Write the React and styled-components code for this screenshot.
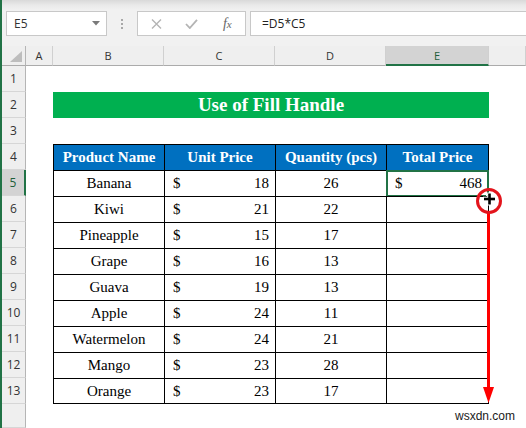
import React from 'react';
import styled, { createGlobalStyle, css } from 'styled-components';

const GlobalStyle = createGlobalStyle`
  html, body { margin: 0; padding: 0; background: #fff; overflow: hidden; }
  * { box-sizing: border-box; }
`;

const Window = styled.div`
  position: relative;
  display: flex;
  width: 526px;
  height: 428px;
  overflow: hidden;
  font-family: "Open Sans", "Noto Sans", sans-serif;
`;

const Stripe = styled.div`
  width: 2px;
  flex: none;
  background: #217346;
`;

const Main = styled.div`
  flex: 1;
  min-width: 0;
  display: flex;
  flex-direction: column;
`;

const FormulaBar = styled.div`
  height: 46px;
  flex: none;
  display: flex;
  align-items: flex-start;
  padding: 11px 0 0 4px;
  background: linear-gradient(#d9d9d9 0px, #e9e9e9 5px, #f1f1f1 10px, #f1f1f1 100%);
`;

const Box = styled.div`
  height: 25px;
  background: #fff;
  border: 1px solid #c8c8c8;
  display: flex;
  align-items: center;
`;

const NameBox = styled(Box)`
  width: 101px;
  justify-content: space-between;
  padding: 0 6px 0 7px;
  font-size: 12px;
  color: #333;
`;

const Grip = styled.div`
  width: 30px;
  height: 25px;
  display: flex;
  flex-direction: column;
  align-items: center;
  justify-content: center;
  gap: 2px;
  padding-right: 1px;
`;

const GripDot = styled.span`
  width: 2px;
  height: 2px;
  background: #a8a8a8;
`;

const FxBox = styled(Box)`
  width: 109px;
  padding-left: 1px;
`;

const FxItem = styled.div`
  width: 36px;
  display: flex;
  justify-content: center;
  align-items: center;
  color: #666;
  font-family: "Liberation Serif", "Times New Roman", serif;
  font-style: italic;
  font-size: 14px;
`;

const FormulaInput = styled(Box)`
  flex: 1;
  margin-left: 4px;
  border-right: none;
  padding-left: 11px;
  font-size: 12px;
  color: #222;
`;

const Sheet = styled.div`
  flex: 1;
  display: grid;
  grid-template-columns: 24px 27px 111px 111px 111px 103px 1fr;
  grid-template-rows: 20px repeat(13, 26px) 1fr;
  background: #fff;
`;

const headBase = css`
  background: #efefef;
  display: flex;
  align-items: center;
  justify-content: center;
  font-size: 11px;
  color: #333;
`;

const Corner = styled.div`
  ${headBase};
  border-right: 1px solid #b5b5b5;
  border-bottom: 1px solid #ababab;
  justify-content: flex-end;
  align-items: flex-end;
  padding: 0 3px 3px 0;
`;

const ColHead = styled.div`
  ${headBase};
  border-right: 1px solid #d0d0d0;
  border-bottom: 1px solid #ababab;
  ${p => p.$active && css`
    background: #d3d3d3;
    color: #1e5e3a;
    border-bottom: 2px solid #217346;
  `}
`;

const RowHead = styled.div`
  ${headBase};
  font-size: 12px;
  border-right: 1px solid #b5b5b5;
  border-bottom: 1px solid #d6d6d6;
  ${p => p.$active && css`
    background: #d3d3d3;
    color: #1e5e3a;
    border-right: 2px solid #217346;
  `}
`;

const Blank = styled.div``;

const Title = styled.div`
  grid-column: span 4;
  background: #00b050;
  color: #fff;
  font-family: "Liberation Serif", "Times New Roman", serif;
  font-weight: bold;
  font-size: 19px;
  display: flex;
  align-items: center;
  justify-content: center;
`;

const TableCell = styled.div`
  position: relative;
  display: flex;
  align-items: center;
  justify-content: center;
  border-top: 1px solid #000;
  border-left: 1px solid #000;
  ${p => p.$lastCol && css`border-right: 1px solid #000;`}
  ${p => p.$lastRow && css`border-bottom: 1px solid #000;`}
  font-family: "Liberation Serif", "Times New Roman", serif;
  font-size: 15px;
  color: #000;
  white-space: nowrap;
  ${p => p.$head && css`
    background: #0070c0;
    color: #fff;
    font-weight: bold;
  `}
  ${p => p.$split && css`
    justify-content: space-between;
    padding: 0 6px 0 8px;
  `}
`;

const Selection = styled.div`
  position: absolute;
  inset: -1px;
  border: 2px solid #217346;
  pointer-events: none;
`;

const Handle = styled.div`
  position: absolute;
  right: -4px;
  bottom: -4px;
  width: 5px;
  height: 5px;
  background: #217346;
  border: 1px solid #fff;
`;

const Annotation = styled.svg`
  position: absolute;
  left: 474px;
  top: 186px;
  overflow: visible;
`;

const Watermark = styled.div`
  position: absolute;
  left: 453px;
  top: 409px;
  font-family: "Liberation Sans", Arial, sans-serif;
  font-size: 12px;
  color: #1a1a1a;
  background: rgba(255, 255, 255, 0.8);
  padding: 0 2px;
`;

const products = [
  { name: 'Banana', price: 18, qty: 26, total: 468 },
  { name: 'Kiwi', price: 21, qty: 22 },
  { name: 'Pineapple', price: 15, qty: 17 },
  { name: 'Grape', price: 16, qty: 13 },
  { name: 'Guava', price: 19, qty: 13 },
  { name: 'Apple', price: 24, qty: 11 },
  { name: 'Watermelon', price: 24, qty: 21 },
  { name: 'Mango', price: 23, qty: 28 },
  { name: 'Orange', price: 23, qty: 17 },
];

const headers = ['Product Name', 'Unit Price', 'Quantity (pcs)', 'Total Price'];

function Money({ value }) {
  return (
    <>
      <span>$</span>
      <span>{value}</span>
    </>
  );
}

function renderRow(r) {
  const cells = [];
  if (r === 2) {
    cells.push(<Title key="t">Use of Fill Handle</Title>);
  } else if (r === 4) {
    headers.forEach((h, i) => {
      cells.push(
        <TableCell key={h} $head $lastCol={i === 3}>{h}</TableCell>
      );
    });
  } else if (r >= 5 && r <= 13) {
    const p = products[r - 5];
    const last = r === 13;
    cells.push(<TableCell key="b" $lastRow={last}>{p.name}</TableCell>);
    cells.push(
      <TableCell key="c" $split $lastRow={last}>
        <Money value={p.price} />
      </TableCell>
    );
    cells.push(<TableCell key="d" $lastRow={last}>{p.qty}</TableCell>);
    cells.push(
      <TableCell key="e" $lastCol $lastRow={last} $split={p.total != null}>
        {p.total != null && <Money value={p.total} />}
        {r === 5 && (
          <Selection>
            <Handle />
          </Selection>
        )}
      </TableCell>
    );
  } else {
    for (let i = 0; i < 4; i++) cells.push(<Blank key={i} />);
  }
  return (
    <React.Fragment key={r}>
      <RowHead $active={r === 5}>{r}</RowHead>
      <Blank />
      {cells}
      <Blank />
    </React.Fragment>
  );
}

export default function App() {
  const rows = [];
  for (let r = 1; r <= 13; r++) rows.push(renderRow(r));
  return (
    <>
      <GlobalStyle />
      <Window>
        <Stripe />
        <Main>
          <FormulaBar>
            <NameBox>
              <span>E5</span>
              <svg width="8" height="5" viewBox="0 0 8 5">
                <polygon points="0,0 8,0 4,4.5" fill="#7a7a7a" />
              </svg>
            </NameBox>
            <Grip>
              <GripDot />
              <GripDot />
              <GripDot />
            </Grip>
            <FxBox>
              <FxItem>
                <svg width="11" height="10" viewBox="0 0 11 10">
                  <path d="M1 0.5 L10 9.5 M10 0.5 L1 9.5" stroke="#b4b4b4" strokeWidth="1.4" fill="none" />
                </svg>
              </FxItem>
              <FxItem>
                <svg width="13" height="10" viewBox="0 0 13 10">
                  <path d="M1 5 L4.8 9 L12 0.8" stroke="#b4b4b4" strokeWidth="1.8" fill="none" />
                </svg>
              </FxItem>
              <FxItem>
                f<span style={{ fontSize: 11 }}>x</span>
              </FxItem>
            </FxBox>
            <FormulaInput>=D5*C5</FormulaInput>
          </FormulaBar>
          <Sheet>
            <Corner>
              <svg width="12" height="11" viewBox="0 0 12 11">
                <polygon points="12,0 12,11 0,11" fill="#bdbdbd" />
              </svg>
            </Corner>
            {['A', 'B', 'C', 'D', 'E'].map(l => (
              <ColHead key={l} $active={l === 'E'}>{l}</ColHead>
            ))}
            <ColHead />
            {rows}
            <RowHead />
          </Sheet>
        </Main>
        <Annotation width="30" height="220" viewBox="0 0 30 220">
          <line x1="14.5" y1="27" x2="14.5" y2="204" stroke="#ff0000" strokeWidth="3" />
          <polygon points="9,201 20,201 14.5,217" fill="#ff0000" />
          <circle cx="15" cy="15" r="11.5" fill="none" stroke="#e3141c" strokeWidth="3" />
          <rect x="9" y="10.7" width="13" height="4.6" fill="#fff" />
          <rect x="13.2" y="6.5" width="4.6" height="13" fill="#fff" />
          <rect x="10" y="11.7" width="11" height="2.6" fill="#000" />
          <rect x="14.2" y="7.5" width="2.6" height="11" fill="#000" />
        </Annotation>
        <Watermark>wsxdn.com</Watermark>
      </Window>
    </>
  );
}
